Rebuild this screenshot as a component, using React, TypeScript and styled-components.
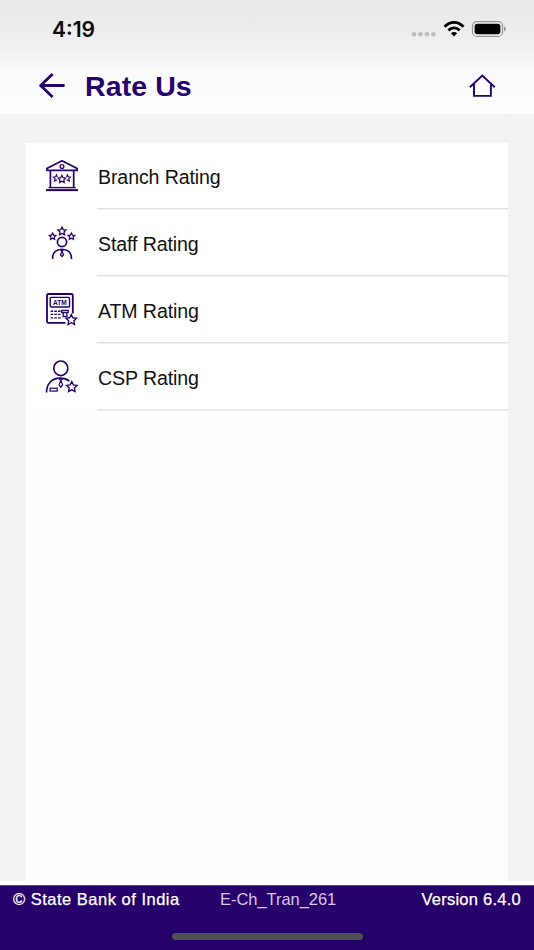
import React from "react";
import styled, { createGlobalStyle } from "styled-components";

const INK = "#26006b";

const GlobalStyle = createGlobalStyle`
  * { box-sizing: border-box; }
  body { margin: 0; background: #fff; font-family: "Liberation Sans", Arial, sans-serif; }
  svg { display: block; flex: none; overflow: visible; }
`;

const Screen = styled.div`
  width: 534px;
  height: 950px;
  display: flex;
  flex-direction: column;
  overflow: hidden;
  background: #fff;
`;

const Top = styled.header`
  height: 114px;
  flex: none;
  background: linear-gradient(#eaeaea 0, #ebebeb 20px, #f1f1f1 48px, #fafafa 72px, #fefefe 104px, #fff 114px);
`;

const StatusBar = styled.div`
  height: 58px;
  padding: 0 28px 0 52px;
  display: flex;
  align-items: center;
  justify-content: space-between;
`;

const Clock = styled.span`
  padding-top: 2px;
  font: 600 21px/24px Inter, sans-serif;
  color: #0b0b0b;
`;

const TitleBar = styled.div`
  height: 56px;
  padding: 0 38px;
  display: flex;
  align-items: center;
`;

const Title = styled.h1`
  flex: 1;
  margin: 0 0 0 19px;
  font-size: 28.5px;
  line-height: 32px;
  letter-spacing: 0.1px;
  color: ${INK};
`;

const Body = styled.main`
  height: 767px;
  flex: none;
  padding: 29px 26px 0;
  background: #f3f3f3;
`;

const Card = styled.section`
  height: 100%;
  background: #fdfdfd;
`;

const List = styled.ul`
  margin: 0;
  padding: 0;
  list-style: none;
  background: #fff;
`;

const Row = styled.li`
  height: 67px;
  padding-left: 14px;
  display: flex;
  gap: 7px;
  &:first-child { height: 66px; }
`;

const IconSlot = styled.div`
  display: flex;
  align-items: flex-end;
  padding-bottom: 8px;
`;

const Label = styled.div`
  flex: 1;
  display: flex;
  align-items: flex-end;
  padding: 0 0 19px 1px;
  border-bottom: 1px solid #e2e2e4;
  box-shadow: 0 1px 0 #f1f1f2;
  font-size: 19.6px;
  line-height: 24px;
  letter-spacing: -0.12px;
  color: #111;
`;

const Footer = styled.footer`
  height: 65px;
  flex: none;
  margin-top: 4px;
  padding: 2px 13px 0;
  background: ${INK};
  border-top: 1px solid #58487c;
  display: flex;
  flex-direction: column;
  align-items: center;
`;

const FooterLine = styled.div`
  width: 100%;
  display: grid;
  grid-template-columns: 207px 1fr auto;
  font-size: 16.5px;
  line-height: 22px;
`;

const FooterText = styled.span<{ $soft?: boolean; $track?: number }>`
  color: ${(p) => (p.$soft ? "#d9c8f0" : "#fff")};
  letter-spacing: ${(p) => p.$track ?? 0}px;
  -webkit-text-stroke: ${(p) => (p.$soft ? "0" : "0.25px #fff")};
  white-space: nowrap;
`;

const HomeIndicator = styled.div`
  width: 191px;
  height: 7px;
  margin-top: 23px;
  border-radius: 4px;
  background: #505050;
`;

const star = (cx: number, cy: number, r: number) =>
  Array.from({ length: 10 }, (_, i) => {
    const a = -Math.PI / 2 + (i * Math.PI) / 5;
    const d = i % 2 ? r * 0.5 : r;
    return `${(cx + d * Math.cos(a)).toFixed(2)},${(cy + d * Math.sin(a)).toFixed(2)}`;
  }).join(" ");

const RowIcon = ({ top = 0, children }: { top?: number; children: React.ReactNode }) => (
  <svg width="50" height="50" viewBox={`0 ${top} 50 50`} fill="none" stroke={INK} strokeWidth="1.7">
    {children}
  </svg>
);

const BranchIcon = () => (
  <RowIcon top={1}>
    <path d="M22 10.8 L6.8 18.4 V20.4 H37.2 V18.4 Z" strokeLinejoin="round" />
    <circle cx="22" cy="16.5" r="1.9" strokeWidth="1.3" />
    <path d="M10.4 20.5 V37.5 M33.7 20.5 V37.5" />
    <path d="M8.5 37.6 H35.6" strokeWidth="1.4" />
    <path d="M6 40.1 H38" strokeWidth="2" />
    <polygon points={star(21.9, 29.3, 4)} strokeWidth="1.2" />
    <path d="M17.3 26.9 L16.5 24.9 L15.6 26.8 L13.4 27.1 L15 28.7 L14.6 31 L17.2 29.8 M26.5 26.9 L27.3 24.9 L28.2 26.8 L30.4 27.1 L28.8 28.7 L29.2 31 L26.6 29.8" strokeWidth="1.2" />
  </RowIcon>
);

const StaffIcon = () => (
  <RowIcon>
    <polygon points={star(22, 13.3, 4.2)} strokeWidth="1.3" />
    <polygon points={star(12.6, 18.5, 3.5)} strokeWidth="1.2" />
    <polygon points={star(31.4, 18.5, 3.5)} strokeWidth="1.2" />
    <circle cx="22" cy="24" r="4.6" />
    <path d="M12.6 41 V40 C12.6 34.8 16.2 31.3 22 31.3 C27.8 31.3 31.4 34.8 31.4 40 V41" />
    <path d="M20.7 31.8 L22 33.2 L23.3 31.8 M22 33.2 L20.5 36.8 L22 38.6 L23.5 36.8 Z" strokeWidth="1.3" />
  </RowIcon>
);

const AtmIcon = () => (
  <RowIcon>
    <path d="M32.8 28.5 V10.5 Q32.8 9 31.3 9 H8.5 Q7 9 7 10.5 V36.4 Q7 37.9 8.5 37.9 H25.5" strokeWidth="1.8" />
    <rect x="10.2" y="12.4" width="19.3" height="9.6" rx="1" strokeWidth="1.4" />
    <text x="19.85" y="19.5" textAnchor="middle" fontFamily="Liberation Sans, sans-serif" fontWeight="700" fontSize="6.3" textLength="13.6" lengthAdjust="spacingAndGlyphs" fill={INK} stroke="none">ATM</text>
    <path d="M10.6 26.2 H20.6 M10.6 29.4 H20.6 M10.6 32.9 H20.6" strokeWidth="1.4" strokeDasharray="2.6 1.1" />
    <path d="M21.7 25.3 H28.2 V27.5 H21.7 Z M23.2 27.5 V31.5 H26.9 V27.5" strokeWidth="1.3" />
    <polygon points={star(31.3, 35, 5.5)} strokeWidth="1.4" fill="#fff" />
  </RowIcon>
);

const CspIcon = () => (
  <RowIcon>
    <ellipse cx="20.8" cy="16.3" rx="7" ry="7.3" />
    <path d="M6.5 40.5 C6.6 31.7 12 26.1 20 26.1 C24.1 26.1 26.9 27.1 29.4 29.1" />
    <path d="M18.6 26.4 L20.8 28.5 L23 26.4 M20.8 28.5 L19 32.8 L20.8 35.2 L22.6 32.8 Z" strokeWidth="1.2" />
    <rect x="10.1" y="36.2" width="7.2" height="2.9" strokeWidth="1.2" />
    <polygon points={star(31.8, 35.1, 5.5)} strokeWidth="1.4" />
  </RowIcon>
);

const StatusIcons = () => (
  <svg width="95" height="20" viewBox="0 0 95 20">
    <g fill="#bdbdbd">
      {[3, 9.5, 16, 22.4].map((x) => <circle key={x} cx={x} cy="15.3" r="2.3" />)}
    </g>
    <g fill="none" stroke="#000" strokeWidth="2.9">
      <path d="M33.6 7.7 C39 1.9 47.1 1.9 52.5 7.7" />
      <path d="M37.4 11.4 C40.8 8 45.3 8 48.7 11.4" />
    </g>
    <path d="M39.9 14.2 C41.7 12.6 44.4 12.6 46.2 14.2 L43.05 17.4 Z" />
    <rect x="61.5" y="2.6" width="30" height="14.8" rx="4.5" fill="#f4f4f4" stroke="#929292" strokeWidth="1.2" />
    <rect x="63.6" y="4.7" width="25.8" height="10.6" rx="2.7" />
    <path d="M93 7.7 C95.4 8.2 95.4 11.8 93 12.3 Z" fill="#929292" />
  </svg>
);

const BackIcon = () => (
  <svg width="28" height="28" viewBox="0 0 28 28" fill="none" stroke={INK} strokeWidth="2.8">
    <path d="M14.6 2 L2.6 13.5 L14.6 25 M2.8 13.5 H26.6" strokeLinejoin="round" />
  </svg>
);

const HomeIcon = () => (
  <svg width="28" height="28" viewBox="0 0 28 28" fill="none" stroke={INK} strokeWidth="1.9">
    <path d="M1.8 15.3 L14.3 3.5 L26.8 15.3 M6 12 V23.9 H22.9 V12" />
  </svg>
);

const items = [
  { label: "Branch Rating", Icon: BranchIcon },
  { label: "Staff Rating", Icon: StaffIcon },
  { label: "ATM Rating", Icon: AtmIcon },
  { label: "CSP Rating", Icon: CspIcon },
];

export default function App() {
  return (
    <Screen>
      <GlobalStyle />
      <Top>
        <StatusBar>
          <Clock>4:19</Clock>
          <StatusIcons />
        </StatusBar>
        <TitleBar>
          <BackIcon />
          <Title>Rate Us</Title>
          <HomeIcon />
        </TitleBar>
      </Top>
      <Body>
        <Card>
          <List>
            {items.map(({ label, Icon }) => (
              <Row key={label}>
                <IconSlot><Icon /></IconSlot>
                <Label>{label}</Label>
              </Row>
            ))}
          </List>
        </Card>
      </Body>
      <Footer>
        <FooterLine>
          <FooterText $track={0.5}>© State Bank of India</FooterText>
          <FooterText $soft $track={-0.05}>E-Ch_Tran_261</FooterText>
          <FooterText $track={0.25}>Version 6.4.0</FooterText>
        </FooterLine>
        <HomeIndicator />
      </Footer>
    </Screen>
  );
}
